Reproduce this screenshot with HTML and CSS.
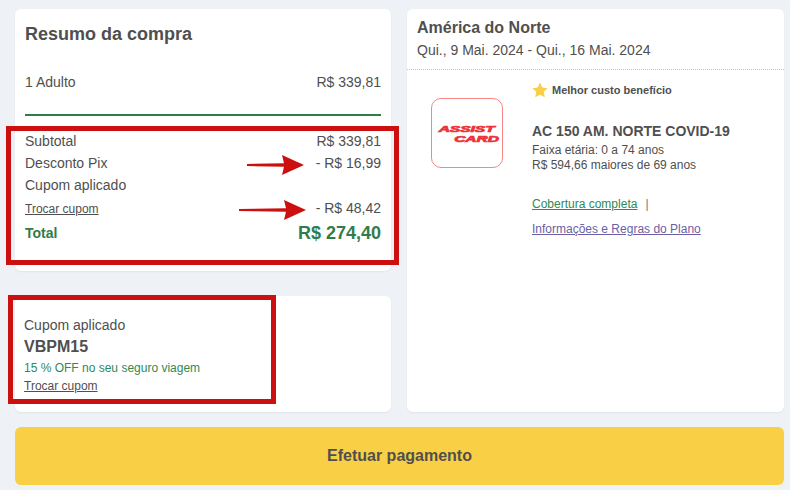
FILE: index.html
```html
<!DOCTYPE html>
<html lang="pt-BR">
<head>
<meta charset="utf-8">
<title>Resumo da compra</title>
<link rel="stylesheet" href="styles.css">
</head>
<body>
<main class="page">
  <div class="columns">
    <div class="left">
      <section class="card summary">
        <h1 class="summary-title">Resumo da compra</h1>
        <div class="row adult"><span>1 Adulto</span><span>R$ 339,81</span></div>
        <hr class="green-rule">
        <div class="row line"><span>Subtotal</span><span>R$ 339,81</span></div>
        <div class="row line"><span>Desconto Pix</span><span>- R$ 16,99</span></div>
        <div class="row line"><span>Cupom aplicado</span></div>
        <div class="row line swap-line"><a class="swap" href="#">Trocar cupom</a><span>- R$ 48,42</span></div>
        <div class="row total"><span class="total-label">Total</span><span class="total-value">R$ 274,40</span></div>
      </section>
      <section class="card coupon">
        <div class="coupon-label">Cupom aplicado</div>
        <div class="coupon-code">VBPM15</div>
        <div class="coupon-off">15 % OFF no seu seguro viagem</div>
        <a class="swap" href="#">Trocar cupom</a>
      </section>
    </div>
    <section class="card plan">
      <header class="plan-head">
        <h2 class="plan-region">América do Norte</h2>
        <p class="plan-dates">Qui., 9 Mai. 2024 - Qui., 16 Mai. 2024</p>
      </header>
      <div class="plan-body">
        <div class="logo"><span class="logo-text"><span class="logo-assist">ASSIST</span><span class="logo-card">CARD</span></span></div>
        <div class="plan-info">
          <div class="badge">
            <svg class="star" viewBox="0 0 24 24" width="16" height="16"><path fill="#f9cf45" d="M12 .8l3.500 7.400 8 1-5.900 5.600 1.600 8.200-7.200-4-7.200 4 1.600-8.200L.5 9.200l8-1z"/></svg>
            <span class="badge-text">Melhor custo benefício</span>
          </div>
          <h3 class="plan-name">AC 150 AM. NORTE COVID-19</h3>
          <p class="plan-meta">Faixa etária: 0 a 74 anos<br>R$ 594,66 maiores de 69 anos</p>
          <div class="plan-link-row"><a class="link-green" href="#">Cobertura completa</a><span class="pipe">|</span></div>
          <a class="link-purple" href="#">Informações e Regras do Plano</a>
        </div>
      </div>
    </section>
  </div>
  <button class="pay" type="button">Efetuar pagamento</button>
</main>

<div class="mark mark-summary"></div>
<div class="mark mark-coupon"></div>
<svg class="arrow arrow-one" viewBox="0 0 57 20" width="57" height="20"><path fill="#cc0f0f" d="M0 9L37 8.300 35 0 57 10 35 20 37 11.700 0 11z"/></svg>
<svg class="arrow arrow-two" viewBox="0 0 67 20" width="67" height="20"><path fill="#cc0f0f" d="M0 9L47 8.300 45 0 67 10 45 20 47 11.700 0 11z"/></svg>
</body>
</html>
```
FILE: styles.css
```css
* { box-sizing: border-box; }
html, body { margin: 0; height: 100%; }
body {
  position: relative;
  width: 790px;
  height: 490px;
  overflow: hidden;
  background: #eef2f6;
  color: #4f4f4f;
  font-family: "Liberation Sans", Arial, sans-serif;
}
.page { padding: 9px 6px 5px 15px; display: flex; flex-direction: column; gap: 15px; }
.columns { display: grid; grid-template-columns: 376px 377px; column-gap: 16px; height: 403px; }
.left { display: flex; flex-direction: column; gap: 25px; }
.card { background: #fff; border-radius: 6px; box-shadow: 0 1px 2px rgba(0,0,0,.06); }

.summary { height: 262px; padding: 14px 10px 0; }
.summary-title { margin: 0 0 28px; font-size: 18px; line-height: 22px; font-weight: 700; }
.row { display: flex; justify-content: space-between; align-items: center; }
.adult { font-size: 14px; line-height: 18px; }
.green-rule { height: 2px; margin: 23px 0 14px; border: 0; background: #2f7d4a; }
.line { font-size: 14px; line-height: 22px; }
.swap-line { height: 23px; }
.swap { color: #4f4f4f; font-size: 12px; line-height: 15px; text-decoration: underline; }
.swap-line .swap { margin-top: 4px; }
.total { margin-top: 1px; }
.total-label { color: #2f7d4a; font-size: 14px; font-weight: 700; }
.total-value { color: #2f7d4a; font-size: 18px; line-height: 26px; font-weight: 700; }

.coupon { height: 116px; padding: 21px 9px 0; }
.coupon-label { font-size: 14px; line-height: 17px; }
.coupon-code { font-size: 16px; line-height: 24px; font-weight: 700; margin-top: 1px; }
.coupon-off { color: #2f8a55; font-size: 12px; line-height: 17px; margin-top: 1px; }
.coupon .swap { display: block; line-height: 19px; }

.plan-head { height: 61px; padding: 9px 10px 0; border-bottom: 1px dotted #c4c4c4; }
.plan-region { margin: 0; font-size: 16px; line-height: 20px; font-weight: 700; }
.plan-dates { margin: 3px 0 0; font-size: 14px; line-height: 18px; }
.plan-body { display: flex; padding: 12px 0 0 24px; }
.logo {
  flex: none;
  width: 72px;
  height: 70px;
  margin-top: 16px;
  border: 1.500px solid #f48686;
  border-radius: 10px;
  padding-top: 24.500px;
  display: flex;
  justify-content: center;
}
.logo-text {
  flex: none;
  width: 33px;
  height: 21px;
  color: #ee3338;
  font-size: 8.900px;
  line-height: 10.300px;
  font-weight: 700;
  font-style: italic;
  white-space: nowrap;
  -webkit-text-stroke: .7px #ee3338;
  transform: scaleX(1.750);
}
.logo-assist { display: block; }
.logo-card { display: block; text-align: right; margin-right: -1.500px; }
.plan-info { margin-left: 29px; }
.badge { display: flex; align-items: center; gap: 4px; height: 16px; font-size: 11px; font-weight: 700; }
.badge-text { line-height: 16px; }
.plan-name { margin: 24px 0 0; font-size: 14px; line-height: 18px; font-weight: 700; }
.plan-meta { margin: 3px 0 0; font-size: 12px; line-height: 15px; }
.plan-link-row { margin-top: 23px; font-size: 12px; line-height: 16px; display: flex; }
.link-green { color: #2f8a55; text-decoration: underline; }
.pipe { margin-left: 8px; color: #777; }
.link-purple { display: block; margin-top: 9px; color: #6b5fa5; font-size: 12px; line-height: 16px; text-decoration: underline; }

.pay {
  width: 769px;
  height: 58px;
  border: 0;
  border-radius: 6px;
  background: #f9cf45;
  color: #4f4f4f;
  font: 700 16px "Liberation Sans", Arial, sans-serif;
}

.mark { position: absolute; border: 5px solid #cc0f0f; }
.mark-summary { left: 6px; top: 126px; width: 393px; height: 139px; }
.mark-coupon { left: 8px; top: 295px; width: 268px; height: 109px; }
.arrow { position: absolute; }
.arrow-one { left: 247px; top: 155px; }
.arrow-two { left: 239px; top: 200px; }
```
